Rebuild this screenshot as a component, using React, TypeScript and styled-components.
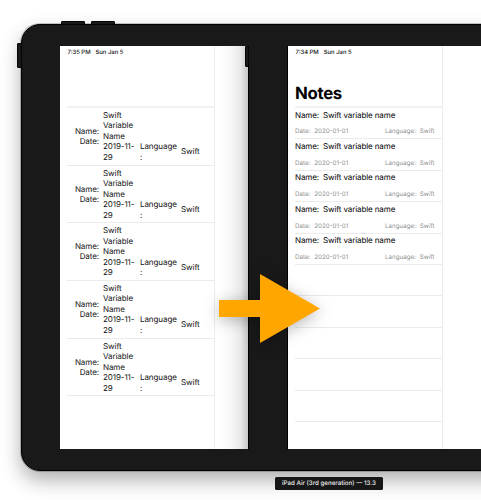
import React from 'react';
import styled, { createGlobalStyle } from 'styled-components';

const GlobalStyle = createGlobalStyle`
  * { box-sizing: border-box; }
  body { margin: 0; background: #fff; overflow: hidden; }
`;

const Page = styled.main`
  position: relative;
  width: 481px;
  height: 500px;
  padding: 24px 0 0 21px;
  overflow: hidden;
  background: #fff;
  color: #111;
  font-family: Inter, 'Liberation Sans', sans-serif;
  font-size: 8px;
  letter-spacing: -0.08px;
  text-rendering: geometricPrecision;
`;

const Device = styled.section`
  position: relative;
  width: 520px;
  height: 447px;
  padding: 21px 0 21px 38px;
  border: 1px solid #000;
  border-radius: 19px;
  background: #191919;
  box-shadow: 0 0 0 1px rgba(0, 0, 0, 0.2), 0 9px 20px rgba(0, 0, 0, 0.32);
`;

const HardwareButton = styled.span<{ $left: number; $top: number; $w: number; $h: number }>`
  position: absolute;
  left: ${(p) => p.$left}px;
  top: ${(p) => p.$top}px;
  width: ${(p) => p.$w}px;
  height: ${(p) => p.$h}px;
  border: 1px solid #050505;
  border-radius: 1px;
  background: #191919;
`;

const Screens = styled.div`
  display: flex;
  height: 403px;
  background: #fff;
`;

const Pane = styled.div<{ $width: number }>`
  flex: none;
  width: ${(p) => p.$width}px;
  height: 403px;
  border-right: 1px solid #ededed;
  padding-left: 7px;
  overflow: hidden;
`;

const Gutter = styled.div`
  flex: none;
  width: 33px;
  background: linear-gradient(to right, #fff 15%, #f7f7f7 50%, #e8e8e8 78%, #c6c6c6);
`;

const Bezel = styled.div`
  position: relative;
  flex: none;
  width: 40px;
  background: #191919;
  border: solid #000;
  border-width: 0 1px;
`;

const StatusBar = styled.header`
  display: flex;
  gap: 5px;
  height: 12px;
  padding-left: 0.5px;
  line-height: 13px;
  font-size: 5.9px;
  letter-spacing: 0;
  font-weight: 500;
  white-space: nowrap;
`;

const TitleArea = styled.div`
  height: 50px;
  padding-top: 25px;
  border-bottom: 2px solid #f1f1f1;
`;

const Title = styled.h1`
  margin: 0;
  font-size: 16.8px;
  letter-spacing: -0.3px;
  line-height: 23px;
  font-weight: 700;
  color: #000;
`;

const WrappedRow = styled.div`
  display: grid;
  grid-template-columns: 32px 33px 37px 22px;
  column-gap: 4px;
  height: 57.7px;
  padding-top: 1.9px;
  line-height: 10.5px;
  border-bottom: 1px solid #ebebeb;
`;

const Labels = styled.div`
  padding-top: 16px;
  line-height: 10px;
  text-align: right;
`;

const Cell = styled.div<{ $top?: number }>`
  padding-top: ${(p) => p.$top ?? 0}px;
  white-space: pre;
`;

const NoteRow = styled.div`
  height: 31.4px;
  padding: 0.7px 7.5px 0 0;
  border-bottom: 1px solid #ebebeb;
`;

const NoteName = styled.div`
  display: flex;
  gap: 4px;
  height: 18.8px;
  line-height: 12px;
  letter-spacing: -0.11px;
  color: #000;
`;

const NoteMeta = styled.div`
  display: flex;
  justify-content: space-between;
  line-height: 9px;
  font-size: 6.2px;
  letter-spacing: 0;
  color: #8e8e8e;
`;

const Pair = styled.span`
  display: flex;
  gap: 4px;
`;

const Arrow = styled.svg`
  position: absolute;
  left: 219px;
  top: 274px;
  overflow: visible;
  filter: drop-shadow(0 3px 8px rgba(0, 0, 0, 0.28));
`;

const DeviceLabel = styled.div`
  position: absolute;
  left: 275px;
  top: 477px;
  width: 108px;
  height: 13px;
  border-radius: 1.5px;
  background: #171717;
  color: #eee;
  font-size: 6.2px;
  letter-spacing: 0;
  font-weight: 500;
  line-height: 14px;
  text-align: center;
  white-space: nowrap;
`;

const wrappedRows = [0, 1, 2, 3, 4];
const noteRows = [true, true, true, true, true, false, false, false, false, false];

export default function App() {
  return (
    <>
      <GlobalStyle />
      <Page>
        <Device>
          <HardwareButton $left={39} $top={-4} $w={24} $h={4} />
          <HardwareButton $left={69} $top={-4} $w={24} $h={4} />
          <HardwareButton $left={-5} $top={18} $w={5} $h={25} />
          <Screens>
            <Pane $width={155}>
              <StatusBar><span>7:35 PM</span><span>Sun Jan 5</span></StatusBar>
              <TitleArea />
              {wrappedRows.map((row) => (
                <WrappedRow key={row}>
                  <Labels>Name:<br />Date:</Labels>
                  <Cell>{'Swift\nVariable\nName\n2019-11-\n29'}</Cell>
                  <Cell $top={31.5}>{'Language\n:'}</Cell>
                  <Cell $top={36.5}>Swift</Cell>
                </WrappedRow>
              ))}
            </Pane>
            <Gutter />
            <Bezel>
              <HardwareButton $left={-4} $top={0} $w={4} $h={21} />
            </Bezel>
            <Pane $width={155}>
              <StatusBar><span>7:34 PM</span><span>Sun Jan 5</span></StatusBar>
              <TitleArea><Title>Notes</Title></TitleArea>
              {noteRows.map((filled, i) => (
                <NoteRow key={i}>
                  {filled && (
                    <>
                      <NoteName><span>Name:</span><span>Swift variable name</span></NoteName>
                      <NoteMeta>
                        <Pair><span>Date:</span><span>2020-01-01</span></Pair>
                        <Pair><span>Language:</span><span>Swift</span></Pair>
                      </NoteMeta>
                    </>
                  )}
                </NoteRow>
              ))}
            </Pane>
          </Screens>
        </Device>
        <Arrow width="101" height="69" viewBox="0 0 101 69">
          <path d="M0 26H41V0L101 34.5L41 69V43H0Z" fill="#ffa600" />
        </Arrow>
        <DeviceLabel>iPad Air (3rd generation) — 13.3</DeviceLabel>
      </Page>
    </>
  );
}
